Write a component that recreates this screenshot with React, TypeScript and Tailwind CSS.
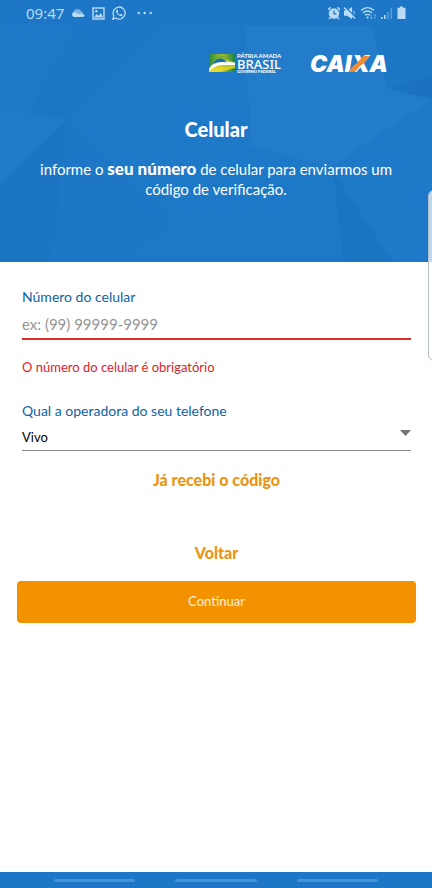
import * as React from 'react';

const StatusBar = () => (
  <div className="relative flex h-[26px] items-center justify-between bg-[#1d77c6] pl-[26px] pr-[26px] text-[#b9dcf6]">
    <div className="flex items-center gap-[7px]">
      <span className="font-['Noto_Sans',sans-serif] text-[15px] leading-5">09:47</span>
      <svg width="14" height="10" viewBox="0 0 14 10" fill="currentColor">
        <path d="M3.500 9A3 3 0 0 1 2.700 3.400 4.100 4.100 0 0 1 10 3a3.400 3.400 0 0 1 .8 6z" opacity=".6" />
        <path d="M3 9a2.400 2.400 0 0 1 0-4.600c1.200-.2 2 .1 3.200 1l2.200.9c2-.9 4.600-.4 5.100 1.300.1.900-.9 1.400-2 1.400z" />
      </svg>
      <svg width="13" height="13" viewBox="0 0 13 13" fill="none" stroke="currentColor">
        <rect x="1" y="1" width="11" height="11" strokeWidth="1.400" />
        <path d="M2 10.500 4.500 7l2 1.700L9 6l2 4.500z" fill="currentColor" stroke="none" />
        <circle cx="4.300" cy="4.300" r="1.200" fill="currentColor" stroke="none" />
      </svg>
      <svg width="14" height="14" viewBox="0 0 24 24" fill="none" stroke="currentColor" strokeWidth="2.200">
        <path d="m1.500 22.500 1.600-5.700A10.300 10.300 0 1 1 7 20.900z" />
        <path
          d="M8.700 6.500c-1.700.5-2.300 2.400-1.200 4.700 1.300 2.900 3.600 5.100 6.500 6.100 2.300.8 4-.3 4.200-2.300l-2.900-1.500-1.600 1.700c-2-.8-3.300-2-4.300-4l1.200-1.500-1.300-3.200z"
          fill="currentColor"
          stroke="none"
        />
      </svg>
      <svg className="ml-1" width="16" height="4" viewBox="0 0 16 4" fill="currentColor">
        <circle cx="1.700" cy="2" r="1.200" />
        <circle cx="7.700" cy="2" r="1.200" />
        <circle cx="13.700" cy="2" r="1.200" />
      </svg>
    </div>
    <div className="flex items-center gap-0.5">
      <svg width="14" height="14" viewBox="0 0 14 14" fill="none" stroke="currentColor">
        <circle cx="7" cy="7.500" r="5.200" fill="currentColor" stroke="none" />
        <path d="M1.300 4a4 4 0 0 1 2.500-2.500M12.700 4a4 4 0 0 0-2.500-2.500M3.500 11.500 2 13M10.500 11.500 12 13" strokeWidth="1.600" />
        <path d="M7 4.500v3.300h2.500" stroke="#1d77c6" strokeWidth="1.200" />
      </svg>
      <svg width="13" height="14" viewBox="0 0 13 14" fill="currentColor">
        <path d="M1 4.500h3L9 1v12L4 9.800H1z" />
        <path d="M10.300 4.500c1.200 1.300 1.200 3.200 0 4.500" fill="none" stroke="currentColor" />
        <path d="M2 .5 13 11.500" stroke="#1d77c6" strokeWidth="1.200" />
        <path d="m1 1.500 11 11" stroke="currentColor" strokeWidth="1.500" />
      </svg>
      <svg className="ml-0.5" width="17" height="14" viewBox="0 0 17 14" fill="none" stroke="currentColor" strokeWidth="1.400">
        <path d="M1 4.500c4-3.700 9-3.700 13 0M3 7c3-2.600 6-2.600 9 0M5 9.300c1.700-1.300 3.300-1.300 5 0" />
        <circle cx="7.500" cy="11.500" r="1.100" fill="currentColor" stroke="none" />
        <path d="M11.500 8.500V13M10 11.500l1.500 1.500 1.500-1.500M15 13V8.500M13.500 10 15 8.500l1.500 1.500" strokeWidth=".8" opacity=".5" />
      </svg>
      <svg className="ml-0.5" width="12" height="14" viewBox="0 0 12 14" fill="currentColor">
        <path d="M0 11h1.500v2H0zM3 9h1.500v4H3z" />
        <path d="M6 6h1.500v7H6zM9.500 2H11v11H9.500z" opacity=".4" />
      </svg>
      <svg className="ml-0.5" width="9" height="14" viewBox="0 0 9 14" fill="currentColor">
        <path d="M3 .5h3v1.300h2.500V13H.5V1.800H3z" />
      </svg>
    </div>
  </div>
);

const Facets = () => (
  <svg className="absolute inset-0 h-full w-full" viewBox="0 0 432 236" preserveAspectRatio="none">
    <path d="M76 0 30 87 68 93 160 0z" fill="#1a70bf" opacity=".3" />
    <path d="M0 82 67 94 0 158z" fill="#2880cd" opacity=".25" />
    <path d="M67 94 0 158v78h52z" fill="#1a71bf" opacity=".4" />
    <path d="M67 94 180 200 250 110z" fill="#237dcb" opacity=".25" />
    <path d="M245 0 251 120 330 142 432 74 388 62 372 0z" fill="#287fcb" opacity=".5" />
    <path d="m372 0 16 62 44-12V0z" fill="#1b72c0" opacity=".25" />
    <path d="m388 62 44-12v23z" fill="#196cb8" opacity=".5" />
    <path d="m333 145 60 91h-49z" fill="#1a70be" opacity=".5" />
    <path d="m333 145 99-40v131h-39z" fill="#267fcd" opacity=".3" />
    <path d="M52 236 67 94 185 183 130 236z" fill="#1d76c4" opacity=".3" />
  </svg>
);

const BrasilLogo = () => (
  <svg className="overflow-visible" width="72" height="21" viewBox="0 0 72 21" role="img" aria-label="Pátria Amada Brasil">
    <defs>
      <linearGradient id="flag" x1="0" x2="1" y1="0" y2="0">
        <stop offset="0" stopColor="#238a40" />
        <stop offset=".5" stopColor="#a9be28" />
        <stop offset="1" stopColor="#16824a" />
      </linearGradient>
      <linearGradient id="glow" x1="0" x2="0" y1="0" y2="1">
        <stop offset="0" stopColor="#5ea63a" />
        <stop offset="1" stopColor="#f6dc23" />
      </linearGradient>
    </defs>
    <path d="M0 1h26v18H0z" fill="url(#flag)" />
    <path d="M0 15 12 2l14 8v5L10 19H0z" fill="url(#glow)" />
    <path d="M0 19C2 10 9 5 16 7.500c3 1.200 5 2 10 2V12H14C8 12 3 15 0 19z" fill="#fff" />
    <path d="M3 12.500C7 4 13 3.500 18 9.500 12 8.500 7 9 3 12.500z" fill="#176cb4" />
    <path d="M0 19c4-5 9-6 15-5l-3 5z" fill="#e5d829" />
    <g fill="#fff">
      <text x="28" y="5" fontSize="6" className="font-['Lato',sans-serif] font-bold">PÁTRIA AMADA</text>
      <text x="28" y="16" fontSize="13" className="font-['Noto_Sans',sans-serif] font-medium">BRASIL</text>
      <text x="28" y="20" fontSize="4" className="font-['Inter',sans-serif] font-bold">GOVERNO FEDERAL</text>
    </g>
  </svg>
);

const CaixaLogo = () => (
  <svg className="overflow-visible" width="77" height="20" viewBox="0 0 77 20" role="img" aria-label="Caixa">
    <text x="0" y="18" fontSize="23" fill="#fff" className="font-['Inter',sans-serif] font-black italic">
      CAIXA
    </text>
    <path d="M38 18h7l5-6 3-2 7-8h-7l-6 7-3 2z" fill="#f28c32" />
  </svg>
);

const Header = () => (
  <header className="relative h-[236px] bg-[#1d78c7] text-white">
    <Facets />
    <div className="relative flex items-center justify-end gap-[29px] pr-[45px] pt-[27px]">
      <BrasilLogo />
      <CaixaLogo />
    </div>
    <div className="relative px-8 pt-[43px] text-center">
      <h1 className="text-xl font-black leading-6">Celular</h1>
      <p className="mt-[18px] text-[15px] leading-5">
        informe o <strong className="text-[17px] font-black leading-5">seu número</strong> de celular para enviarmos um
        código de verificação.
      </p>
    </div>
  </header>
);

const App = () => {
  const [phone, setPhone] = React.useState('');

  return (
    <div className="relative flex min-h-screen flex-col overflow-hidden bg-white font-['Lato',sans-serif]">
      <StatusBar />
      <Header />
      <form className="flex flex-col pl-[17px] pr-4 pt-[25px]" onSubmit={(e) => e.preventDefault()}>
        <div className="flex flex-col px-[5px]">
          <label htmlFor="phone" className="text-sm leading-5 text-[#0f62a5]">
            Número do celular
          </label>
          <input
            id="phone"
            type="tel"
            value={phone}
            onChange={(e) => setPhone(e.target.value)}
            placeholder="ex: (99) 99999-9999"
            className="h-[33px] w-full border-b-2 border-[#d9302f] pt-0.5 text-[15px] text-black outline-none placeholder:text-[#959595]"
          />
          <p className="mt-[17px] text-[13px] leading-5 text-[#dc1e26]">O número do celular é obrigatório</p>

          <label htmlFor="carrier" className="mt-6 text-sm leading-5 text-[#0f62a5]">
            Qual a operadora do seu telefone
          </label>
          <div className="relative">
            <select
              id="carrier"
              defaultValue="Vivo"
              className="h-[30px] w-full appearance-none border-b border-[#858585] pt-1 text-[13px] text-black outline-none"
            >
              <option>Vivo</option>
              <option>Claro</option>
              <option>Oi</option>
              <option>TIM</option>
            </select>
            <svg className="pointer-events-none absolute right-0 top-[9px]" width="11" height="6" viewBox="0 0 11 6">
              <path d="M0 0h11L5.500 6z" fill="#757575" />
            </svg>
          </div>
        </div>

        <button type="button" className="mt-[19px] self-center text-base font-black leading-5 text-[#eb9513]">
          Já recebi o código
        </button>
        <button type="button" className="mt-[53px] self-center text-base font-black leading-5 text-[#eb9513]">
          Voltar
        </button>
        <button type="submit" className="mt-[18px] h-[42px] rounded bg-[#f39200] text-[13px] text-[#fff3dc]">
          Continuar
        </button>
      </form>

      <div className="absolute -right-1 top-[190px] h-[171px] w-2 rounded-l-md border border-[#b5bfc9] bg-white/70" />

      <div className="mt-auto grid h-4 grid-cols-3 gap-10 bg-[#1d77c6] px-[54px] pt-[7px]">
        <span className="h-[3px] rounded-full bg-[#4292d6]" />
        <span className="h-[3px] rounded-full bg-[#4292d6]" />
        <span className="h-[3px] rounded-full bg-[#4292d6]" />
      </div>
    </div>
  );
};

export default App;
